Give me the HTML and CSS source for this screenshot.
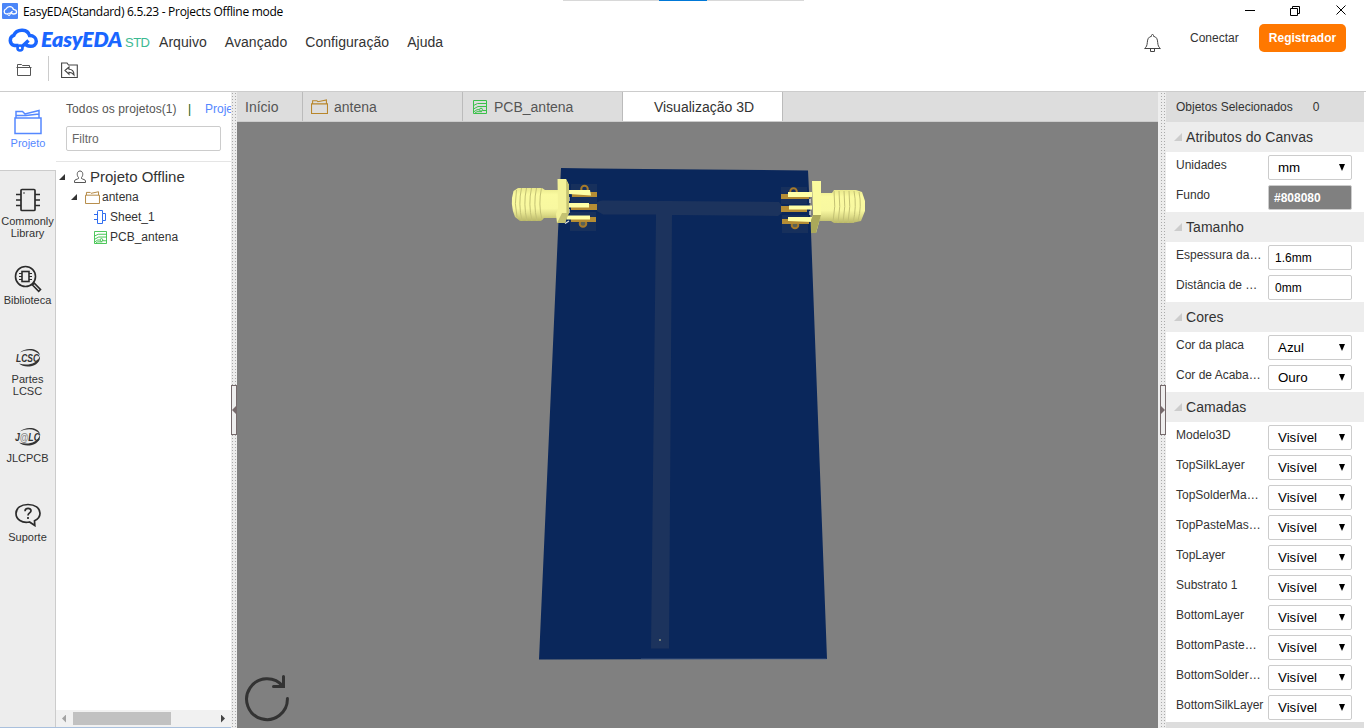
FILE: index.html
```html
<!DOCTYPE html>
<html lang="pt">
<head>
<meta charset="utf-8">
<title>EasyEDA(Standard) 6.5.23 - Projects Offline mode</title>
<link rel="stylesheet" href="styles.css">
</head>
<body>
<svg class="defs" width="0" height="0">
  <symbol id="cloud" viewBox="0 0 32 24"><path d="M11.500 17.500H7.500A5.300 5.300 0 0 1 6.800 7.300C8.500 3.300 12 2 15.500 2.200C19.500 2.400 21.800 4.700 22.600 7.600C26.600 7.700 29.300 10.300 29.300 13.200C29.300 16.700 26.500 18.300 23.500 18.300C20.500 18.300 18.800 17 18 15M14.500 19L21.500 12.500" fill="none" stroke="currentColor" stroke-width="3.500"/><circle cx="13" cy="20" r="2.500" fill="none" stroke="currentColor" stroke-width="2.600"/></symbol>
  <symbol id="folder" viewBox="0 0 16 14"><path d="M.5 4.500V13.500H15.500V4.500ZM1.500 4.500V1.500H5.500L6.500 2.500L14.500 .8V4.500" fill="none" stroke="currentColor"/></symbol>
  <symbol id="pcb" viewBox="0 0 14 14"><path d="M.5.500H13.500V13.500H.5ZM.5 5.500L4.500 3.500H13.500M.5 9L5 6.500H13.500M.5 12L4 9.700H6M9.500 10.500H13.500M2 13L4 11.700H9" fill="none" stroke="currentColor"/><circle cx="8" cy="9.700" r="1.500" fill="none" stroke="currentColor"/></symbol>
</svg>
<div class="app">
  <header class="titlebar">
    <svg class="appicon" viewBox="0 0 16 16"><rect width="16" height="16" rx="1" fill="#4b86f8"/><path d="M6 10.800H4A2.500 2.500 0 0 1 4 6C5 4 6.500 3.500 8 3.600C9.800 3.700 11 5 11.400 6.300C13.500 6.600 14.600 7.700 14.600 9C14.600 10.500 13 11 11.500 11C10.300 11 9.500 10.500 9 9.600M7.500 11L10.500 8.300" fill="none" stroke="#fff" stroke-width="1.300"/><circle cx="7" cy="11.300" r="1.200" fill="none" stroke="#fff"/></svg>
    <span class="wintitle">EasyEDA(Standard) 6.5.23 - Projects Offline mode</span>
    <span class="loadtrack"><i></i></span>
    <svg class="winctl" viewBox="0 0 106 24" fill="none" stroke="#000"><path d="M0 10.500H10M45.500 8.500H52.500V15.500H45.500ZM47.500 8.500V6.500H54.500V13.500H52.500M91.500 5.500L100.500 14.500M100.500 5.500L91.500 14.500"/></svg>
  </header>
  <div class="menubar">
    <svg class="logo"><use href="#cloud"/></svg>
    <span class="brand">EasyEDA</span><span class="std">STD</span>
    <nav><span>Arquivo</span><span>Avançado</span><span>Configuração</span><span>Ajuda</span></nav>
    <svg class="bell" viewBox="0 0 17 20" fill="none" stroke="#444"><path d="M.6 14.500H16.400C14.500 13 14 11.500 13.700 8.500C13.500 5 12.500 2.800 9.500 2.300V1.500A1 1 0 0 0 7.500 1.500V2.300C4.500 2.800 3.500 5 3.300 8.500C3 11.500 2.500 13 .6 14.500ZM6.500 14.500V17.500H10.500V14.500"/></svg>
    <span class="connect">Conectar</span><span class="register">Registrador</span>
  </div>
  <div class="toolbar">
    <svg class="tfolder" viewBox="0 0 16 13" fill="none" stroke="#555"><path d="M.5 3.500H15.500M1.500 3.500V11.500H14.500V3.500M1.500 3V.5H5.500L6.500 1.500H13.500V3"/></svg>
    <i class="sep"></i>
    <svg class="tback" viewBox="0 0 17 17" fill="none" stroke="#444" stroke-width="1.100"><path d="M.6 1H6L7.500 3H16.300V15.500H.6ZM4 8.500L8 5V7.300C11 7.300 13 9 13 13C11.500 10.800 10 10.200 8 10.200V12.200Z"/></svg>
  </div>
  <main class="work">
    <aside class="rail">
      <div class="railitem active"><svg width="28" height="26" viewBox="0 0 28 26" fill="none" stroke="#5588ff" stroke-width="1.500"><path d="M1 9H27V24.500H1ZM2 9V2.500H8.500L11 5L25 1.500V9M2 6.500H12L25 5"/></svg><span>Projeto</span></div>
      <div class="railitem common"><svg width="26" height="24" viewBox="0 0 26 24" fill="none" stroke="#2b2b2b" stroke-width="1.700"><rect x="6" y="1.500" width="14" height="21" rx="1"/><path d="M1 6.500H6M1 12H6M1 17.500H6M20 6.500H25M20 12H25M20 17.500H25"/><circle cx="9" cy="5" r=".8" fill="#2b2b2b" stroke="none"/></svg><span>Commonly<br>Library</span></div>
      <div class="railitem biblio"><svg width="28" height="28" viewBox="0 0 28 28" fill="none" stroke="#2b2b2b" stroke-width="1.600"><circle cx="11.500" cy="11.500" r="10"/><rect x="8" y="6.500" width="7" height="10"/><path d="M5 8.500H8M5 11.500H8M5 14.500H8M15 8.500H18M15 11.500H18M15 14.500H18" stroke-width="1.200"/><path d="M18.500 20L20.300 18.200L26.500 24.500L24.700 26.300Z"/></svg><span>Biblioteca</span></div>
      <div class="railitem lcsc"><svg width="28" height="20" viewBox="0 0 28 20"><path d="M6 4.500C11-.5 24-.5 26 7C21 1.300 13 1 6 4.500ZM5 15.500C11 21.500 27 18.500 26 8C23 16.500 13 18 5 15.500Z" fill="#333"/><text x="2" y="13.500" textLength="23" lengthAdjust="spacingAndGlyphs" class="marktext">LCSC</text></svg><span>Partes<br>LCSC</span></div>
      <div class="railitem jlc"><svg width="28" height="20" viewBox="0 0 28 20"><path d="M6 4.500C11-.5 24-.5 26 7C21 1.300 13 1 6 4.500ZM5 15.500C11 21.500 27 18.500 26 8C23 16.500 13 18 5 15.500Z" fill="#333"/><text x="1" y="13.500" textLength="25" lengthAdjust="spacingAndGlyphs" class="marktext">J<tspan fill="#888">@</tspan>LC</text></svg><span>JLCPCB</span></div>
      <div class="railitem suporte"><svg width="28" height="24" viewBox="0 0 28 24" fill="none" stroke="#2b2b2b" stroke-width="1.700"><path d="M15.500 19C8 20.500 2 16.500 2 10.500C2 5 7 1.500 14 1.500C21 1.500 26 5 26 10.300C26 14 23.500 16.500 20.500 17.800L20.800 22.500Z"/><path d="M11 8.200C11 4.300 17.200 4.500 17 8C16.800 10 14 10 14 12.500M14 14V16"/></svg><span>Suporte</span></div>
    </aside>
    <section class="tree">
      <div class="treehead"><div class="crumbs"><span class="all">Todos os projetos(1)</span><b>|</b><span class="mine">Projetos</span></div><div class="filter">Filtro</div></div>
      <ul class="nodes">
        <li class="root"><i class="tri"></i><svg width="12" height="14" viewBox="0 0 12 14" fill="none" stroke="#555"><path d="M.5 12.500V11C.5 9.500 3 9.500 4.500 8.500V7.500C2.500 5.500 2.800 1 6 1C9.200 1 9.500 5.500 7.500 7.500V8.500C9 9.500 11.500 9.500 11.500 11V12.500Z"/></svg><span>Projeto Offline</span></li>
        <li class="dir"><i class="tri"></i><svg class="gold" width="15" height="13"><use href="#folder"/></svg><span>antena</span></li>
        <li class="leaf"><svg width="14" height="14" viewBox="0 0 14 14" fill="none" stroke="#2f6df0"><path d="M3.500 1.500Q3.500.5 4.500.5H8.500V3.500M3.500 1.500V13.500H8.500V10.500M8.500 3.500H11.500V10.500H8.500ZM0 4.500H3.500M0 9.500H3.500"/></svg><span>Sheet_1</span></li>
        <li class="leaf pcb"><svg class="green" width="13" height="13"><use href="#pcb"/></svg><span>PCB_antena</span></li>
      </ul>
      <div class="hscroll"><i class="left"></i><i class="thumb"></i><i class="right"></i></div>
    </section>
    <div class="split"><span class="grip"><i></i></span></div>
    <section class="center">
      <div class="tabs">
        <div class="tab home">Início</div>
        <div class="tab t2"><svg class="gold2" width="17" height="15"><use href="#folder"/></svg><span>antena</span></div>
        <div class="tab t3"><svg class="green" width="14" height="14"><use href="#pcb"/></svg><span>PCB_antena</span></div>
        <div class="tab on"><span>Visualização 3D</span></div>
      </div>
      <svg class="scene" viewBox="237 122 921 606">
        <defs>
          <linearGradient id="brass" x1="0" y1="0" x2="0" y2="1"><stop offset="0" stop-color="#e9e88c"/><stop offset=".2" stop-color="#fafaa0"/><stop offset=".62" stop-color="#f8f8a0"/><stop offset=".8" stop-color="#dedd88"/><stop offset="1" stop-color="#b9b768"/></linearGradient>
        </defs>
        <path d="M561 168L593 168.500L645 169L808 170.500L811 232L827 659L539 659.500L558 232Z" fill="#0a275b"/>
        <path d="M641 659H826.500" stroke="#52658a" stroke-width=".7"/>
        <path d="M596 204Q598 200.500 603 200.500L779 202L782 206V213L778 216L672 215L669 648.500H651L656 214.500L603 214.500L597 211Z" fill="#1c335d"/>
        <path d="M659 639h2v2h-2z" fill="#6e7a78"/>
        <path d="M571 184H597V204H571ZM570 212H596V231H570ZM781 187H807V204H781ZM782 215H808V233H782Z" fill="#17305c"/>
        <g fill="none" stroke="#a67a2b" stroke-width="2"><circle cx="584.500" cy="189" r="3.300"/><circle cx="583" cy="223.500" r="3.300" fill="#596257"/><circle cx="793.500" cy="191.500" r="3.300"/><circle cx="795" cy="225" r="3.300" fill="#596257"/></g>
        <path d="M572 192H597V197H572ZM571 204H597V210H571ZM571 217H596V222H571ZM781 194H809V199H781ZM781 206H807V212H781ZM782 219H809V224H782Z" fill="#b58d34"/>
        <path d="M567 190H590L591 195.500L569 194ZM567 203H589V207.500H567ZM567 215.500H590V219.500H567ZM788 192H812V197H788ZM789 205.500H812V209.500H789ZM788 217H812V222L788 221Z" fill="#ffffa6"/>
        <path d="M569 197V201M569 209V213M569 221L565 223.500M810 199V203M810 211V215" fill="none" stroke="#e0e2dd" stroke-width="1.300"/>
        <path d="M513.500 191L518 188H542L545 190H559V218H544L541 221H520L515 217Q509.500 204 513.500 191Z" fill="url(#brass)"/>
        <path d="M516.500 190Q514 204 517 217M521.500 188Q518 204 522 221M526.500 188Q523 204 527 221M531.500 188Q528 204 532 221M536.500 188Q533 204 537 221M541.500 188Q538 204 542 220" fill="none" stroke="#c3c175" stroke-width="1"/>
        <path d="M557.500 179H566L569 185V212L565 223H557L556 214L558 208Z" fill="#f3f299"/>
        <path d="M566 179L569 185V213L565 223H557L562 213H566.500Z" fill="#c4c272"/>
        <path d="M821 193H832L834 190H856L862 192L865 201V211L861 221L852 223H834L831 221H820Z" fill="url(#brass)"/>
        <path d="M834 191Q836 206 833 222M839 191Q841 206 838 223M844 191Q846 206 843 223M849 191Q851 206 848 223M854 191Q857 206 853 223M859 192Q862 206 858 221" fill="none" stroke="#c3c175"/>
        <path d="M812 181H821V215L816 233H811V220L813 215Z" fill="#fafa9e"/>
        <path d="M813 215H821L816 233H811V220Z" fill="#aaa85a"/>
        <g fill="none" stroke="#333" stroke-width="3" stroke-linecap="round"><path d="M283 686.500A20.400 20.400 0 1 0 287.400 698.500"/><path d="M273.500 686.500H283.500V676.500"/></g>
      </svg>
    </section>
    <div class="split wide"><span class="grip"><i></i></span></div>
    <aside class="props">
      <div class="selected"><span>Objetos Selecionados</span><span>0</span></div>
      <h3><i></i>Atributos do Canvas</h3>
      <div class="row"><label>Unidades</label><div class="pick">mm</div></div>
      <div class="row"><label>Fundo</label><div class="field color">#808080</div></div>
      <h3><i></i>Tamanho</h3>
      <div class="row"><label>Espessura da…</label><div class="field">1.6mm</div></div>
      <div class="row"><label>Distância de …</label><div class="field">0mm</div></div>
      <h3><i></i>Cores</h3>
      <div class="row"><label>Cor da placa</label><div class="pick">Azul</div></div>
      <div class="row"><label>Cor de Acaba…</label><div class="pick">Ouro</div></div>
      <h3><i></i>Camadas</h3>
      <div class="row"><label>Modelo3D</label><div class="pick">Visível</div></div>
      <div class="row"><label>TopSilkLayer</label><div class="pick">Visível</div></div>
      <div class="row"><label>TopSolderMa…</label><div class="pick">Visível</div></div>
      <div class="row"><label>TopPasteMas…</label><div class="pick">Visível</div></div>
      <div class="row"><label>TopLayer</label><div class="pick">Visível</div></div>
      <div class="row"><label>Substrato 1</label><div class="pick">Visível</div></div>
      <div class="row"><label>BottomLayer</label><div class="pick">Visível</div></div>
      <div class="row"><label>BottomPaste…</label><div class="pick">Visível</div></div>
      <div class="row"><label>BottomSolder…</label><div class="pick">Visível</div></div>
      <div class="row"><label>BottomSilkLayer</label><div class="pick">Visível</div></div>
    </aside>
  </main>
</div>
</body>
</html>
```
FILE: styles.css
```css
* { box-sizing: border-box; }
body { margin: 0; background: #fff; color: #333; font: 12px/14px "Liberation Sans", Arial, sans-serif; overflow: hidden; }
svg { display: block; flex: none; }
.defs { position: absolute; }
.app { width: 1366px; height: 728px; display: flex; flex-direction: column; }
.titlebar { height: 24px; flex: none; display: flex; align-items: flex-start; padding: 3px 0 0 2px; }
.appicon { width: 16px; height: 16px; }
.wintitle { margin-left: 5px; width: 540px; color: #000; font: 12px/17px "Open Sans", sans-serif; letter-spacing: -.3px; white-space: nowrap; }
.loadtrack { width: 241px; height: 1px; margin-top: -3px; background: #d8d8d8; padding-left: 96px; }
.loadtrack i { display: block; width: 48px; height: 1px; background: #0078d7; }
.winctl { width: 106px; height: 24px; margin: -3px 0 0 441px; }
.menubar { height: 32px; flex: none; display: flex; align-items: flex-start; padding-left: 7px; }
.logo { width: 32px; height: 24px; margin-top: 4px; color: #1a66ff; }
.brand { width: 82px; margin: 2px 0 0 2px; color: #1a66ff; font: italic 800 21.500px/27px Lato, sans-serif; letter-spacing: -.2px; }
.std { width: 36px; margin: 11px 0 0 2px; color: #3cba92; font-size: 13px; line-height: 16px; letter-spacing: -.5px; }
.menubar nav { width: 985px; display: flex; gap: 18px; padding-top: 9px; margin-left: -2px; font-size: 14px; line-height: 18px; letter-spacing: .05px; }
.bell { width: 17px; height: 20px; margin-top: 10px; }
.connect { width: 69px; margin: 7px 0 0 29px; }
.register { width: 87px; height: 28px; border-radius: 5px; background: #ff7800; color: #fff; font-weight: bold; line-height: 28px; text-align: center; }
.toolbar { height: 36px; flex: none; display: flex; align-items: flex-start; padding-left: 16px; border-bottom: 1px solid #ccc; }
.tfolder { width: 16px; height: 13px; margin-top: 8px; }
.sep { width: 1px; height: 25px; background: #ccc; margin-left: 16px; }
.tback { width: 17px; height: 17px; margin: 6px 0 0 12px; }
.work { height: 636px; display: flex; }
.rail { width: 56px; flex: none; display: flex; flex-direction: column; background: #ededed; font-size: 11px; line-height: 12px; text-align: center; border-bottom: 1px solid #a9c0dd; }
.railitem { display: flex; flex-direction: column; align-items: center; flex: none; border-right: 1px solid #ccc; height: 79px; }
.railitem.active { height: 79px; background: #fff; color: #5588ff; border-right: 0; border-bottom: 1px solid #ccc; padding: 17px 0 0; }
.active span { margin-top: 2px; }
.common { padding-top: 17px; }
.common span { margin-top: 3px; }
.biblio { padding-top: 15px; height: 83px; }
.biblio span { margin-top: 1px; }
.lcsc { padding-top: 15px; }
.lcsc span { margin-top: 5px; }
.jlc { padding-top: 15px; }
.jlc span { margin-top: 5px; }
.suporte { padding-top: 12px; height: auto; flex: 1; }
.suporte span { margin-top: 4px; }
.marktext { font: italic bold 10px "Liberation Sans", sans-serif; fill: #333; }
.tree { width: 175px; flex: none; overflow: hidden; display: flex; flex-direction: column; border-bottom: 1px solid #a9c0dd; }
.treehead { height: 70px; flex: none; border-bottom: 1px solid #e5e5e5; padding: 10px 0 0 10px; }
.crumbs { display: flex; white-space: nowrap; color: #555; }
.crumbs > * { flex: none; }
.all { width: 122px; letter-spacing: .1px; }
.crumbs b { width: 17px; font-weight: normal; color: #0a5a0a; }
.mine { color: #5588ff; }
.filter { width: 155px; height: 25px; margin-top: 10px; border: 1px solid #ccc; border-radius: 2px; padding-left: 5px; line-height: 24px; color: #666; }
.nodes { list-style: none; margin: 0; padding: 5px 0 0 3px; flex: 1; }
.nodes li { display: flex; align-items: center; height: 20px; white-space: nowrap; }
.tri { width: 6px; height: 6px; background: #333; clip-path: polygon(100% 0, 100% 100%, 0 100%); }
.root { font-size: 15px; }
.root svg { margin: 0 4px 0 9px; }
.dir { padding-left: 12px; }
.dir svg { margin: 0 2px 0 8px; }
.leaf { padding-left: 35px; }
.leaf svg { margin-right: 2px; }
.leaf.pcb svg { margin-right: 3px; }
.gold { color: #b08238; }
.gold2 { color: #b8862b; }
.green { color: #3ac14a; }
.hscroll { height: 17px; flex: none; display: flex; align-items: center; background: #f1f1f1; padding-left: 6px; }
.left { width: 4px; height: 8px; background: #a3a3a3; clip-path: polygon(100% 0, 100% 100%, 0 50%); }
.thumb { width: 98px; height: 13px; background: #c1c1c1; margin: 0 50px 0 7px; }
.right { width: 4px; height: 8px; background: #444; clip-path: polygon(0 0, 100% 50%, 0 100%); }
.split { width: 6px; flex: none; background: radial-gradient(circle at 1.500px 1.500px, #aaa 0 .6px, #ececec .9px) 0 0 / 3px 3px; padding-top: 293px; }
.split.wide { width: 8px; border-left: 2px solid #eee; }
.grip { display: flex; align-items: center; width: 6px; height: 50px; border: 1px solid #75696b; background: #eee; }
.grip i { width: 4px; height: 8px; background: #75696b; clip-path: polygon(100% 0, 100% 100%, 0 50%); }
.wide .grip i { clip-path: polygon(0 0, 100% 50%, 0 100%); }
.center { width: 921px; flex: none; display: flex; flex-direction: column; }
.tabs { height: 30px; flex: none; display: flex; background: #ddd; border-bottom: 1px solid #ccc; font-size: 14px; color: #555; }
.tab { width: 160px; display: flex; align-items: center; border-right: 1px solid #bbb; }
.home { width: 66px; padding-left: 8px; }
.t2 { padding-left: 8px; gap: 6px; }
.t3 { padding-left: 10px; gap: 7px; }
.tab.on { background: #fff; color: #333; justify-content: center; padding-left: 3px; }
.scene { width: 921px; height: 606px; background: #808080; }
.props { width: 198px; flex: none; background: #ddd; }
.selected { height: 30px; display: flex; align-items: center; padding-left: 10px; gap: 20px; }
.props h3 { height: 30px; margin: 0; background: #ededed; display: flex; align-items: center; padding-left: 8px; gap: 4px; font-size: 14px; font-weight: normal; letter-spacing: .05px; }
.props h3 i { width: 8px; height: 8px; background: #ccc; clip-path: polygon(100% 0, 100% 100%, 0 100%); }
.row { height: 30px; display: flex; background: #fff; padding: 3px 0 0 10px; }
.row label { width: 92px; flex: none; padding-top: 3px; white-space: nowrap; }
.pick, .field { width: 84px; height: 25px; border: 1px solid #ccc; border-radius: 2px; background: #fff; color: #000; font-size: 13.333px; line-height: 24px; padding-left: 9px; display: flex; justify-content: space-between; }
.pick::after { content: ""; width: 6px; height: 7px; margin: 8px 6px 0 0; background: #000; clip-path: polygon(0 0, 100% 0, 50% 100%); }
.field { font-size: 12px; padding-left: 6px; }
.field.color { background: #808080; color: #fff; font-weight: bold; padding-left: 5px; }
```
